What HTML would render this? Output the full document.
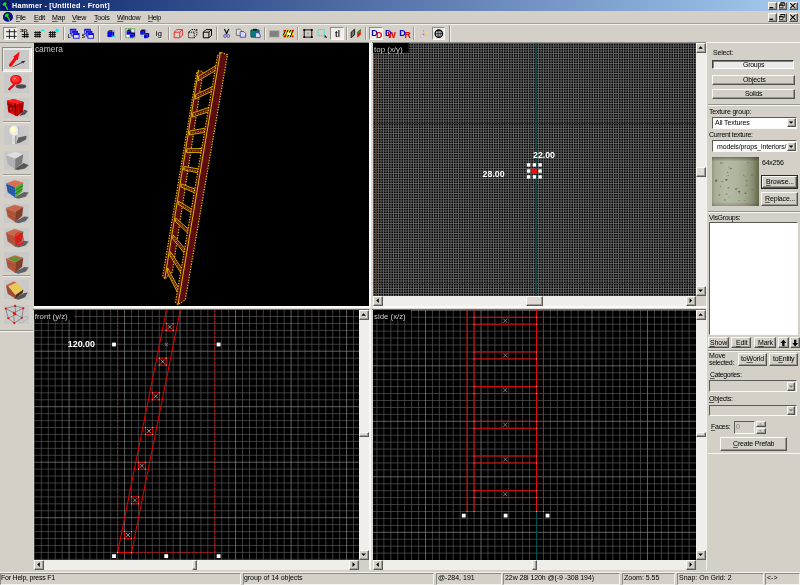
<!DOCTYPE html><html><head><meta charset="utf-8"><title>Hammer - [Untitled - Front]</title><style>
*{box-sizing:border-box}
html,body{margin:0;padding:0}
body{width:800px;height:585px;overflow:hidden;background:#d4d0c8;position:relative;font-family:"Liberation Sans",sans-serif;font-size:8.6px;color:#000}
.a{position:absolute}
.t{position:absolute;white-space:nowrap;line-height:10px;height:10px}
.btn{position:absolute;background:#d4d0c8;border:1px solid;border-color:#fbfaf8 #55534f #55534f #fbfaf8;box-shadow:inset -1px -1px 0 #9a9892;text-align:center;white-space:nowrap;overflow:hidden}
.sunk{position:absolute;border:1.25px solid;border-color:#5c5a56 #fbfaf8 #fbfaf8 #5c5a56}
.sb{position:absolute;background:#efeeea}
.ar{position:absolute;background:#d4d0c8;border:1px solid;border-color:#fbfaf8 #5e5c58 #5e5c58 #fbfaf8;box-shadow:inset -1px -1px 0 #a09e98}
.sep{position:absolute;border-top:1px solid #96948e;border-bottom:1px solid #f8f7f4;height:2px}
.vsep{position:absolute;border-left:1px solid #808080;border-right:1px solid #fff;width:2px}
u{text-decoration:underline;text-decoration-thickness:0.65px;text-underline-offset:0.6px;text-decoration-color:rgba(0,0,0,.55)}
svg{position:absolute;display:block}
svg text{font-family:"Liberation Sans",sans-serif}
svg,.t{will-change:transform}
</style></head><body><div class="a" style="left:0;top:0;width:800px;height:11px;background:linear-gradient(90deg,#0a246a 0%,#a6caf0 100%)"></div>
<div class="t" style="left:12.1px;top:0.5999999999999996px;font-size:7.2px;color:#fff;font-weight:bold;letter-spacing:0.237px;">Hammer - [Untitled - Front]</div>
<svg style="left:0.39999999999999947px;top:-0.40000000000000036px" width="11.4" height="11.4" viewBox="-5.7 -5.7 11.4 11.4"><circle r="4.7" fill="#06062a"/><clipPath id="gc5"><circle r="4.7"/></clipPath><g clip-path="url(#gc5)"><path d="M-5.7,-3.6h1.5M-3.4,-3.6h1.5M-1.1,-3.6h1.5M1.2,-3.6h1.5M3.5,-3.6h1.5M-4.8,-2.2h1.5M-2.5,-2.2h1.5M-0.2,-2.2h1.5M2.1,-2.2h1.5M4.4,-2.2h1.5M-5.7,-0.8h1.5M-3.4,-0.8h1.5M-1.1,-0.8h1.5M1.2,-0.8h1.5M3.5,-0.8h1.5M-4.8,0.6h1.5M-2.5,0.6h1.5M-0.2,0.6h1.5M2.1,0.6h1.5M4.4,0.6h1.5M-5.7,2.0h1.5M-3.4,2.0h1.5M-1.1,2.0h1.5M1.2,2.0h1.5M3.5,2.0h1.5M-4.8,3.4h1.5M-2.5,3.4h1.5M-0.2,3.4h1.5M2.1,3.4h1.5M4.4,3.4h1.5" stroke="#1010f0" stroke-width="1.1" fill="none"/><path d="M-3.3,-1 L-2.4,-2.7 L-0.8,-3.5 L0.6,-3.3 L0.9,-1.8 L0.2,-0.6 L1.1,0.8 L2.1,2.6 L2.3,4.4 L1.3,4.7 L0.6,2.7 L-0.4,1 L-1,-0.1 L-2.5,0.1 Z" fill="#10e010"/></g></svg>
<svg style="left:1.5999999999999996px;top:11.299999999999999px" width="11.8" height="11.8" viewBox="-5.9 -5.9 11.8 11.8"><circle r="4.9" fill="#06062a"/><clipPath id="gc17"><circle r="4.9"/></clipPath><g clip-path="url(#gc17)"><path d="M-5.9,-3.6h1.5M-3.6,-3.6h1.5M-1.3,-3.6h1.5M1.0,-3.6h1.5M3.3,-3.6h1.5M-5.0,-2.2h1.5M-2.7,-2.2h1.5M-0.4,-2.2h1.5M1.9,-2.2h1.5M4.2,-2.2h1.5M-5.9,-0.8h1.5M-3.6,-0.8h1.5M-1.3,-0.8h1.5M1.0,-0.8h1.5M3.3,-0.8h1.5M-5.0,0.6h1.5M-2.7,0.6h1.5M-0.4,0.6h1.5M1.9,0.6h1.5M4.2,0.6h1.5M-5.9,2.0h1.5M-3.6,2.0h1.5M-1.3,2.0h1.5M1.0,2.0h1.5M3.3,2.0h1.5M-5.0,3.4h1.5M-2.7,3.4h1.5M-0.4,3.4h1.5M1.9,3.4h1.5M4.2,3.4h1.5" stroke="#1010f0" stroke-width="1.1" fill="none"/><path d="M-3.3,-1 L-2.4,-2.7 L-0.8,-3.5 L0.6,-3.3 L0.9,-1.8 L0.2,-0.6 L1.1,0.8 L2.1,2.6 L2.3,4.4 L1.3,4.7 L0.6,2.7 L-0.4,1 L-1,-0.1 L-2.5,0.1 Z" fill="#10e010"/></g></svg>
<div class="btn" style="left:767.5px;top:1.5px;width:9.0px;height:8.3px"></div>
<svg style="left:0;top:0" width="800" height="40"><rect x="769.4" y="7.050000000000001" width="3.8" height="1.2" fill="#000"/></svg>
<div class="btn" style="left:777.5px;top:1.5px;width:9.5px;height:8.3px"></div>
<svg style="left:0;top:0" width="800" height="40"><rect x="780.85" y="2.7500000000000004" width="3.6" height="3" fill="none" stroke="#000" stroke-width="0.65"/><rect x="780.55" y="2.45" width="4.2" height="1.0" fill="#000"/><rect x="779.35" y="4.95" width="3.6" height="2.9" fill="#d4d0c8" stroke="#000" stroke-width="0.65"/><rect x="779.05" y="4.65" width="4.2" height="1.0" fill="#000"/></svg>
<div class="btn" style="left:788.5px;top:1.5px;width:9.5px;height:8.3px"></div>
<svg style="left:0;top:0" width="800" height="40"><path d="M790.25,3.0500000000000003 L795.45,8.25 M795.45,3.0500000000000003 L790.25,8.25" stroke="#000" stroke-width="1.05"/></svg>
<div class="btn" style="left:767.5px;top:13px;width:9.0px;height:8.5px"></div>
<svg style="left:0;top:0" width="800" height="40"><rect x="769.4" y="18.65" width="3.8" height="1.2" fill="#000"/></svg>
<div class="btn" style="left:777.5px;top:13px;width:9.5px;height:8.5px"></div>
<svg style="left:0;top:0" width="800" height="40"><rect x="780.85" y="14.35" width="3.6" height="3" fill="none" stroke="#000" stroke-width="0.65"/><rect x="780.55" y="14.05" width="4.2" height="1.0" fill="#000"/><rect x="779.35" y="16.55" width="3.6" height="2.9" fill="#d4d0c8" stroke="#000" stroke-width="0.65"/><rect x="779.05" y="16.25" width="4.2" height="1.0" fill="#000"/></svg>
<div class="btn" style="left:788.5px;top:13px;width:9.5px;height:8.5px"></div>
<svg style="left:0;top:0" width="800" height="40"><path d="M790.25,14.65 L795.45,19.85 M795.45,14.65 L790.25,19.85" stroke="#000" stroke-width="1.05"/></svg>
<div class="t" style="left:16px;top:13.0px;font-size:7.1px;color:#000;letter-spacing:-0.460px;"><u>F</u>ile</div>
<div class="t" style="left:33.5px;top:13.0px;font-size:7.1px;color:#000;letter-spacing:-0.334px;"><u>E</u>dit</div>
<div class="t" style="left:51.9px;top:13.0px;font-size:7.1px;color:#000;letter-spacing:-0.237px;"><u>M</u>ap</div>
<div class="t" style="left:72.2px;top:13.0px;font-size:7.1px;color:#000;letter-spacing:-0.315px;"><u>V</u>iew</div>
<div class="t" style="left:93.8px;top:13.0px;font-size:7.1px;color:#000;letter-spacing:-0.215px;"><u>T</u>ools</div>
<div class="t" style="left:116.8px;top:13.0px;font-size:7.1px;color:#000;letter-spacing:-0.342px;"><u>W</u>indow</div>
<div class="t" style="left:148px;top:13.0px;font-size:7.1px;color:#000;letter-spacing:-0.451px;"><u>H</u>elp</div>
<div class="sep" style="left:0;top:23.2px;width:800px;border-top-color:#a4a29c;border-bottom-color:#f2f1ee"></div>
<div class="sep" style="left:0;top:42px;width:710px;border-bottom:0;height:1px"></div>
<div class="vsep" style="left:449px;top:25px;height:17px;border-left-color:#8a8882;border-right-color:#efeeea"></div><div class="vsep" style="left:98.2px;top:25.5px;height:16px;border-left-color:#9a9892;border-right-color:#f2f1ee"></div><div class="vsep" style="left:63.4px;top:27px;height:13px;border-left-color:#9a9892;border-right-color:#efeeea"></div><div class="vsep" style="left:120.0px;top:27px;height:13px;border-left-color:#9a9892;border-right-color:#efeeea"></div><div class="vsep" style="left:167.9px;top:27px;height:13px;border-left-color:#9a9892;border-right-color:#efeeea"></div><div class="vsep" style="left:216.0px;top:27px;height:13px;border-left-color:#9a9892;border-right-color:#efeeea"></div><div class="vsep" style="left:263.9px;top:27px;height:13px;border-left-color:#9a9892;border-right-color:#efeeea"></div><div class="vsep" style="left:297.4px;top:27px;height:13px;border-left-color:#9a9892;border-right-color:#efeeea"></div><div class="vsep" style="left:346.0px;top:27px;height:13px;border-left-color:#9a9892;border-right-color:#efeeea"></div><div class="vsep" style="left:365.2px;top:27px;height:13px;border-left-color:#9a9892;border-right-color:#efeeea"></div><div class="vsep" style="left:412.9px;top:27px;height:13px;border-left-color:#9a9892;border-right-color:#efeeea"></div><div class="a" style="left:3.4px;top:26.5px;width:13.7px;height:13.5px;background:#eeede9;border:1px solid;border-color:#8e8c86 #f8f7f4 #f8f7f4 #8e8c86"></div><div class="a" style="left:330.1px;top:26.8px;width:13.8px;height:13.4px;background:#eeede9;border:1px solid;border-color:#8e8c86 #f8f7f4 #f8f7f4 #8e8c86"></div><div class="a" style="left:368.5px;top:26.8px;width:14.1px;height:13.4px;background:#eeede9;border:1px solid;border-color:#8e8c86 #f8f7f4 #f8f7f4 #8e8c86"></div><div class="a" style="left:431.5px;top:26.8px;width:13.8px;height:13.4px;background:#eeede9;border:1px solid;border-color:#8e8c86 #f8f7f4 #f8f7f4 #8e8c86"></div><svg style="left:0px;top:24px" width="460" height="19" viewBox="0 24 460 19" ><path d="M9.45,29.2V38.9M14.4,29.2V38.9M6.1,31.7H16.7M6.1,36.4H16.7" stroke="#202020" stroke-width="0.95" fill="none"/><text transform="translate(19.9,32.1) scale(1.22,0.88)" font-size="4.9" font-weight="bold" fill="#000">3D</text><path d="M24.5,32V37.8M27.0,32V37.8M21.8,34.6H28.8M21.8,36.6H28.8" stroke="#000" stroke-width="0.95" fill="none"/><path d="M35.85,31.2V37.6M37.9,31.2V37.6M39.7,31.2V37.6M34.1,32.55H41.0M34.1,34.6H41.0M34.1,36.45H41.0" stroke="#181818" stroke-width="1.0" fill="none"/><rect x="40.9" y="29.7" width="3.6" height="1.5" rx="0.7" fill="#00f0f0"/><path d="M50.5,31.2V37.6M52.5,31.2V37.6M54.3,31.2V37.6M48.7,32.55H55.9M48.7,34.6H55.9M48.7,36.45H55.9" stroke="#181818" stroke-width="1.0" fill="none"/><path d="M57,28.3l2.2,2.2l-2.2,2.2l-2.2,-2.2z" fill="#00f0f0"/><text x="67.7" y="37.8" font-size="4.8" font-weight="bold" fill="#000">L</text><rect x="70.3" y="29.2" width="5.6" height="4.6" fill="#e8e8ff" stroke="#1010e0" stroke-width="0.9"/><rect x="70.3" y="29.2" width="5.6" height="1.5" fill="#1010e0"/><rect x="71.89999999999999" y="31.4" width="5.6" height="4.6" fill="#e8e8ff" stroke="#1010e0" stroke-width="0.9"/><rect x="71.89999999999999" y="31.4" width="5.6" height="1.5" fill="#1010e0"/><rect x="73.5" y="33.6" width="5.6" height="4.6" fill="#e8e8ff" stroke="#1010e0" stroke-width="0.9"/><rect x="73.5" y="33.6" width="5.6" height="1.5" fill="#1010e0"/><text x="81.7" y="37.8" font-size="4.8" font-weight="bold" fill="#000">S</text><rect x="84.7" y="29.2" width="5.6" height="4.6" fill="#e8e8ff" stroke="#1010e0" stroke-width="0.9"/><rect x="84.7" y="29.2" width="5.6" height="1.5" fill="#1010e0"/><rect x="86.3" y="31.4" width="5.6" height="4.6" fill="#e8e8ff" stroke="#1010e0" stroke-width="0.9"/><rect x="86.3" y="31.4" width="5.6" height="1.5" fill="#1010e0"/><rect x="87.9" y="33.6" width="5.6" height="4.6" fill="#e8e8ff" stroke="#1010e0" stroke-width="0.9"/><rect x="87.9" y="33.6" width="5.6" height="1.5" fill="#1010e0"/><path d="M107.4,31.8l1.6,-1.6h5.2l-1.6,1.6z" fill="#101030"/><path d="M112.60000000000001,31.8l1.6,-1.6v5.2l-1.6,1.6z" fill="#000090"/><rect x="107.4" y="31.8" width="5.2" height="5.2" fill="#0808e8"/><path d="M111.5,35.6h3.6v1.2h-3.6z" fill="#00d8d8"/><rect x="112.4" y="30.4" width="1.6" height="1.2" fill="#fff"/><rect x="125.6" y="28.6" width="9.2" height="9.3" fill="none" stroke="#20a020" stroke-width="0.8" stroke-dasharray="1.2 0.8"/><path d="M126.6,31.200000000000003l1.6,-1.6h3.4l-1.6,1.6z" fill="#101030"/><path d="M130.0,31.200000000000003l1.6,-1.6v3.4l-1.6,1.6z" fill="#000090"/><rect x="126.6" y="31.200000000000003" width="3.4" height="3.4" fill="#0808e8"/><path d="M130,34.2l1.6,-1.6h3.4l-1.6,1.6z" fill="#101030"/><path d="M133.4,34.2l1.6,-1.6v3.4l-1.6,1.6z" fill="#000090"/><rect x="130" y="34.2" width="3.4" height="3.4" fill="#0808e8"/><rect x="131.2" y="29.8" width="2.2" height="1.8" fill="#f4f4f4"/><rect x="126.8" y="35" width="2.2" height="1.8" fill="#f4f4f4"/><path d="M140.2,31.0l1.6,-1.6h3.6l-1.6,1.6z" fill="#101030"/><path d="M143.79999999999998,31.0l1.6,-1.6v3.6l-1.6,1.6z" fill="#000090"/><rect x="140.2" y="31.0" width="3.6" height="3.6" fill="#0808e8"/><path d="M144,34.6l1.6,-1.6h3.6l-1.6,1.6z" fill="#101030"/><path d="M147.6,34.6l1.6,-1.6v3.6l-1.6,1.6z" fill="#000090"/><rect x="144" y="34.6" width="3.6" height="3.6" fill="#0808e8"/><path d="M145.6,30.2l2.2,1.8M141,35.4l2,1.8" stroke="#30c8d8" stroke-width="0.9" stroke-dasharray="1 0.7"/><text x="155.8" y="36.3" font-size="8" fill="#000">ig</text><path d="M174.2,32.2h5.6v5.6h-5.6zM174.2,32.2l2.6,-2.6h5.6l-2.6,2.6M182.39999999999998,29.6v5.6l-2.6,2.6" stroke="#f02020" stroke-width="0.9" fill="none"/><path d="M188.6,32.2h5.6v5.6h-5.6zM188.6,32.2l2.6,-2.6h5.6l-2.6,2.6M196.79999999999998,29.6v5.6l-2.6,2.6" stroke="#000" stroke-width="0.9" fill="none" stroke-dasharray="1.3 0.8"/><path d="M203.3,32.2h5.6v5.6h-5.6zM203.3,32.2l2.6,-2.6h5.6l-2.6,2.6M211.5,29.6v5.6l-2.6,2.6" stroke="#000" stroke-width="1.0" fill="none"/><path d="M224.4,29l2.6,5.2M228.8,29l-2.6,5.2" stroke="#000" stroke-width="1.1" fill="none"/><ellipse cx="225" cy="36" rx="1.3" ry="1.5" fill="none" stroke="#5050c0" stroke-width="0.9"/><ellipse cx="228.3" cy="36" rx="1.3" ry="1.5" fill="none" stroke="#5050c0" stroke-width="0.9"/><path d="M236.4,29.2h3.6l1.6,1.6v4.6h-5.2z" fill="#e0e0e0" stroke="#606060" stroke-width="0.8"/><path d="M240.2,31.6h3.6l1.8,1.8v3.8h-5.4z" fill="#dcdcf4" stroke="#3030b0" stroke-width="0.8"/><rect x="250.8" y="29.8" width="8.4" height="7.4" rx="0.8" fill="#008080" stroke="#003838" stroke-width="0.7"/><rect x="253" y="28.8" width="4" height="1.8" fill="#101010"/><path d="M255.4,32.8h3l1.8,1.6v3.2h-4.8z" fill="#dcdcf4" stroke="#3030b0" stroke-width="0.8"/><rect x="269.3" y="30.8" width="9.8" height="6.3" fill="#808080" stroke="#b0b0b0" stroke-width="0.6"/><rect x="283.6" y="29.9" width="9.9" height="7.4" fill="#f0e000"/><path d="M285,37.3l3,-7.4M287.6,37.3l3,-7.4M290.2,37.3l3,-7.4M283.2,35.4l2.4,-5.5" stroke="#000" stroke-width="1" fill="none"/><rect x="286.6" y="32.5" width="4.2" height="2.4" fill="#f8f8f0"/><rect x="283.6" y="29.9" width="1.8" height="1.8" fill="#f00000"/><rect x="291.7" y="29.9" width="1.8" height="1.8" fill="#f00000"/><rect x="283.6" y="35.5" width="1.8" height="1.8" fill="#f00000"/><rect x="291.7" y="35.5" width="1.8" height="1.8" fill="#f00000"/><rect x="304.2" y="29.9" width="7.6" height="7.2" fill="none" stroke="#000" stroke-width="0.9"/><rect x="303.3" y="29" width="1.8" height="1.8" fill="#000"/><rect x="310.9" y="29" width="1.8" height="1.8" fill="#000"/><rect x="303.3" y="36.2" width="1.8" height="1.8" fill="#000"/><rect x="310.9" y="36.2" width="1.8" height="1.8" fill="#000"/><path d="M306.70,32.20L309.30,34.80M309.30,32.20L306.70,34.80" stroke="#808080" stroke-width="0.6" fill="none"/><rect x="318" y="29.6" width="6.4" height="6" fill="none" stroke="#20d8d8" stroke-width="0.9" stroke-dasharray="1.3 0.8"/><path d="M324.6,35.2v2.6l0.8,-0.6l0.9,0.9l0.6,-0.6l-0.9,-0.9l0.9,-0.3z" fill="#000"/><text x="335" y="36.7" font-size="8.2" font-weight="bold" fill="#111">tl</text><path d="M351.2,32.2l3.4,-3v5.6l-3.4,3z" fill="#707070" stroke="#000" stroke-width="0.8"/><path d="M357.2,32.2l3.6,-3.2v5.6l-3.6,3.2z" fill="#e81010"/><path d="M357.2,34.8l3.6,-3.2v-2.6l-3.6,3.2z" fill="#10a010"/><text x="371.2" y="35.8" font-size="9" font-weight="bold" fill="#0808d0">D</text><text x="376" y="38.3" font-size="8.8" font-weight="bold" fill="#e80000">D</text><text x="385" y="35.8" font-size="9" font-weight="bold" fill="#0808d0">D</text><text x="387.6" y="38.3" font-size="8.8" font-weight="bold" fill="#e80000">W</text><text x="399.3" y="35.8" font-size="9" font-weight="bold" fill="#0808d0">D</text><text x="404.4" y="38.3" font-size="8.8" font-weight="bold" fill="#e80000">R</text><path d="M421,36.8l3,-3.6l1.4,1.2l-3,3.4z" fill="#f8f8f8" stroke="#909090" stroke-width="0.4"/><circle cx="426.6" cy="32.4" r="1.1" fill="#f0e040"/><circle cx="423.4" cy="34.6" r="1" fill="#e060d0"/><circle cx="423.6" cy="30.8" r="0.6" fill="#808080"/><circle cx="438.8" cy="33.7" r="3.7" fill="#f0f0f0" stroke="#000" stroke-width="1.3"/><path d="M438.8,30v7.4M435.1,33.7h7.4" stroke="#000" stroke-width="0.7"/><ellipse cx="438.8" cy="33.7" rx="1.7" ry="3.6" fill="none" stroke="#000" stroke-width="0.6"/></svg>
<div class="a" style="left:0;top:43px;width:34px;height:528px;background:#d4d0c8"></div><div class="a" style="left:32.6px;top:43px;width:1px;height:288px;background:#f4f3f0"></div><div class="a" style="left:0;top:330px;width:33.5px;height:1px;background:#9a9892"></div><div class="a" style="left:0;top:331px;width:33.5px;height:1px;background:#f4f3f0"></div><div class="a" style="left:1.6px;top:47.4px;width:30.6px;height:24.8px;background:#eae9e4;border:1px solid;border-color:#8a8882 #fbfaf8 #fbfaf8 #8a8882"></div><div class="a" style="left:4.1px;top:49.5px;width:25.4px;height:19.3px;background:#c9c9c9"></div><div class="a" style="left:4.1px;top:74.2px;width:25.4px;height:19.3px;background:#c9c9c9"></div><div class="a" style="left:4.1px;top:98.3px;width:25.4px;height:19.3px;background:#c9c9c9"></div><div class="a" style="left:4.1px;top:126.2px;width:25.4px;height:19.3px;background:#c9c9c9"></div><div class="a" style="left:4.1px;top:150.6px;width:25.4px;height:19.3px;background:#c9c9c9"></div><div class="a" style="left:4.1px;top:179px;width:25.4px;height:19.3px;background:#c9c9c9"></div><div class="a" style="left:4.1px;top:203.5px;width:25.4px;height:19.3px;background:#c9c9c9"></div><div class="a" style="left:4.1px;top:227.9px;width:25.4px;height:19.3px;background:#c9c9c9"></div><div class="a" style="left:4.1px;top:252.3px;width:25.4px;height:19.3px;background:#c9c9c9"></div><div class="a" style="left:4.1px;top:280px;width:25.4px;height:19.3px;background:#c9c9c9"></div><div class="a" style="left:4.1px;top:304.7px;width:25.4px;height:19.3px;background:#c9c9c9"></div><div class="sep" style="left:2.6px;top:121.4px;width:28.4px;border-top-color:#9c9a94;border-bottom-color:#eceae6"></div><div class="sep" style="left:2.6px;top:173.8px;width:28.4px;border-top-color:#9c9a94;border-bottom-color:#eceae6"></div><div class="sep" style="left:2.6px;top:275px;width:28.4px;border-top-color:#9c9a94;border-bottom-color:#eceae6"></div><svg style="left:0px;top:43px" width="34" height="290" viewBox="0 43 34 290" ><path d="M12,66.9L21.6,62.2L21.3,61.3L25.5,60.8L23.2,63.6L22.6,62.8L12.6,67.2z" fill="#303030"/><path d="M19.7,51.6L13.2,56.7L14.3,57.5L9.2,64.3a1.5,1.5 0 0 0 2.6,1.6L16.7,59.5L17.8,60z" fill="#f80808"/><ellipse cx="20.9" cy="86.4" rx="5.4" ry="2.2" fill="#4a4a4a"/><path d="M13.6,83.4L8.3,88.6a1.2,1.2 0 0 0 1.6,1.7L15.4,85z" fill="#e80808"/><ellipse cx="16" cy="79.8" rx="5.8" ry="4.9" fill="#e80c0c"/><ellipse cx="15.6" cy="79.3" rx="4" ry="3.2" fill="#ff3030"/><ellipse cx="14.4" cy="78.4" rx="1.2" ry="0.9" fill="#ff9090"/><path d="M19,116L24.6,109.6L27.6,111.2L25,114.6z" fill="#505050"/><path d="M6.9,100.7L13.8,98.9L23.6,101.9L23,111.6L17,116.3L8.2,112.2z" fill="#e00808"/><path d="M6.9,100.7L13.8,98.9L23.6,101.9L16.6,104.6z" fill="#ff2020"/><path d="M16.6,104.6L23.6,101.9L23,111.6L17,116.3z" fill="#a80000"/><path d="M7.2,103.8L16.4,107.2" stroke="#600000" stroke-width="1.1" fill="none"/><path d="M15.2,103.2L15.6,115.6" stroke="#500000" stroke-width="1.3" fill="none"/><ellipse cx="10.6" cy="108.6" rx="2.6" ry="3" fill="#8a0000"/><ellipse cx="10.8" cy="108.8" rx="1.3" ry="1.6" fill="#f01818"/><path d="M18.4,106.4L18.8,114.4" stroke="#d01010" stroke-width="1.2" fill="none"/><path d="M16.2,143.6L18.4,137.4L26.6,135.8L26,139.4L19.8,142.8z" fill="#5c5c5c"/><rect x="12.4" y="135.4" width="3.9" height="8.8" rx="1.3" fill="#e6e6e6"/><rect x="14.9" y="135.4" width="1.6" height="8.8" rx="0.7" fill="#9c9c9c"/><path d="M12.4,139.2h3.9M12.4,141.2h3.9" stroke="#b4b4b4" stroke-width="0.5"/><circle cx="14.4" cy="130.7" r="5.1" fill="#ececec"/><path d="M16.4,126a5.1,5.1 0 0 1 1,9a8,8 0 0 0 -1,-9z" fill="#a8a8a8"/><circle cx="13.3" cy="129.6" r="3.1" fill="#ffffb4"/><circle cx="12.9" cy="129.2" r="1.6" fill="#ffffe0"/><path d="M14.1,169.2l9.6,-6.2l5,2.2l-3.8,3.2l-7,1.6z" fill="#484848" opacity="0.9"/><path d="M5.8999999999999995,155.2L14.7,151.79999999999998L23.299999999999997,154.2L15.299999999999999,158.79999999999998z" fill="#dedede"/><path d="M5.8999999999999995,155.2L15.299999999999999,158.79999999999998L15.1,169.2L7.699999999999999,164.2z" fill="#b2b2b2"/><path d="M15.299999999999999,158.79999999999998L23.299999999999997,154.2L22.1,163.2L15.1,169.2z" fill="#7c7c7c"/><path d="M14.1,197.4l10,-5.5l4.6,0.6l-3.2,4.2l-7,2z" fill="#505050" opacity="0.85"/><path d="M5.8999999999999995,183.6L14.7,180.2L23.299999999999997,182.6L15.299999999999999,187.2z" fill="#e26a4c"/><path d="M5.8999999999999995,183.6L15.299999999999999,187.2L15.1,197.6L7.699999999999999,192.6z" fill="#2a66b8"/><path d="M7.1,185.4l7.6,3.2M7.5,188l7.4,3.6M7.8999999999999995,190.6l7,3.8" stroke="#103060" stroke-width="0.9" stroke-dasharray="1.4 1.2" fill="none"/><path d="M15.299999999999999,187.2L23.299999999999997,182.6L22.1,191.6L15.1,197.6z" fill="#48ac34"/><path d="M15.299999999999999,190.4l7.6,-4.8M15.2,193.8l7.2,-4.8" stroke="#286018" stroke-width="0.8" fill="none"/><path d="M14.1,221.9l10,-5.5l4.6,0.6l-3.2,4.2l-7,2z" fill="#505050" opacity="0.85"/><path d="M5.8999999999999995,208.1L14.7,204.7L23.299999999999997,207.1L15.299999999999999,211.7z" fill="#c8684a"/><path d="M5.8999999999999995,208.1L15.299999999999999,211.7L15.1,222.1L7.699999999999999,217.1z" fill="#b2563c"/><path d="M15.299999999999999,211.7L23.299999999999997,207.1L22.1,216.1L15.1,222.1z" fill="#84402c"/><path d="M6.699999999999999,211.5l8.5,3.7M7.3,214.5l7.9,4M15.299999999999999,215.3l7.4,-4.6M15.2,218.7l7,-4.8" stroke="#6a3020" stroke-width="0.45" opacity="0.55" fill="none"/><path d="M14.1,246.3l10,-5.5l4.6,0.6l-3.2,4.2l-7,2z" fill="#505050" opacity="0.85"/><path d="M5.8999999999999995,232.5L14.7,229.1L23.299999999999997,231.5L15.299999999999999,236.1z" fill="#c8684a"/><path d="M5.8999999999999995,232.5L15.299999999999999,236.1L15.1,246.5L7.699999999999999,241.5z" fill="#b2563c"/><path d="M15.299999999999999,236.1L23.299999999999997,231.5L22.1,240.5L15.1,246.5z" fill="#84402c"/><path d="M6.699999999999999,235.9l8.5,3.7M7.3,238.9l7.9,4M15.299999999999999,239.70000000000002l7.4,-4.6M15.2,243.1l7,-4.8" stroke="#6a3020" stroke-width="0.45" opacity="0.55" fill="none"/><g transform="translate(19.1,238.70000000000002) rotate(-14)" fill="none" stroke="#ff1010" stroke-width="0.95"><ellipse rx="4" ry="5.8"/><ellipse rx="2.5" ry="3.8"/><ellipse rx="1" ry="1.7" fill="#ff1010"/></g><g transform="translate(0,2.4)"><path d="M14.1,270.1l10,-5.5l4.6,0.6l-3.2,4.2l-7,2z" fill="#505050" opacity="0.85"/><path d="M5.8999999999999995,256.3L14.7,252.9L23.299999999999997,255.3L15.299999999999999,259.90000000000003z" fill="#c8684a"/><path d="M5.8999999999999995,256.3L15.299999999999999,259.90000000000003L15.1,270.3L7.699999999999999,265.3z" fill="#b2563c"/><path d="M15.299999999999999,259.90000000000003L23.299999999999997,255.3L22.1,264.3L15.1,270.3z" fill="#84402c"/><path d="M6.699999999999999,259.70000000000005l8.5,3.7M7.3,262.70000000000005l7.9,4M15.299999999999999,263.5l7.4,-4.6M15.2,266.90000000000003l7,-4.8" stroke="#6a3020" stroke-width="0.45" opacity="0.55" fill="none"/></g><path d="M8.5,258.8L14.7,256.6L20.700000000000003,258.2L15.299999999999999,261.40000000000003z" fill="#4f9a2c"/><path d="M14.1,298.4l10,-5.5l3.6,-0.4l-2.6,4.8l-6.6,2.4z" fill="#484848" opacity="0.9"/><path d="M5.8999999999999995,285.2L13.7,281.6L16.7,282.4L8.5,286.4z" fill="#c86848"/><path d="M5.8999999999999995,285.2L8.5,286.4L15.5,295L15.1,298.6L7.699999999999999,293.8z" fill="#a04c34"/><path d="M8.5,286.4L16.7,282.4L23.5,289.6L15.5,295z" fill="#e8c858"/><path d="M15.5,295L23.5,289.6L22.700000000000003,293L15.1,298.6z" fill="#50281c"/><path d="M18.1,321.3l8,-5l2.6,1.6l-7.4,5z" fill="none" stroke="#a8a8a8" stroke-width="0.6"/><path d="M5.7,308.5L15.1,305.9M15.1,305.9L23.3,308.3M23.3,308.3L13.7,312.7M13.7,312.7L5.7,308.5M5.7,308.5L8.3,318.3M13.7,312.7L14.3,323.1M23.3,308.3L21.9,317.7M8.3,318.3L14.3,323.1M14.3,323.1L21.9,317.7M15.1,305.9L15.5,314.3M15.5,314.3L8.3,318.3M15.5,314.3L21.9,317.7" stroke="#585858" stroke-width="0.55" fill="none"/><circle cx="5.7" cy="308.5" r="1.05" fill="#f00808"/><circle cx="15.1" cy="305.9" r="1.05" fill="#f00808"/><circle cx="23.3" cy="308.3" r="1.05" fill="#f00808"/><circle cx="13.7" cy="312.7" r="1.05" fill="#f00808"/><circle cx="8.3" cy="318.3" r="1.05" fill="#f00808"/><circle cx="15.5" cy="314.3" r="1.05" fill="#f00808"/><circle cx="21.9" cy="317.7" r="1.05" fill="#f00808"/><circle cx="14.3" cy="323.1" r="1.05" fill="#f00808"/><circle cx="14.7" cy="313.7" r="1.05" fill="#f00808"/></svg>
<div class="a" style="left:33px;top:42px;width:674px;height:529px;background:#dcd9d2"></div><div class="a" style="left:34px;top:306px;width:336.5px;height:2.2px;background:#fbfaf8"></div><div class="a" style="left:373px;top:306px;width:333px;height:2.2px;background:#fbfaf8"></div><div class="a" style="left:369px;top:43px;width:1.5px;height:265px;background:#fbfaf8"></div><div class="a" style="left:369px;top:310px;width:1.5px;height:260.5px;background:#fbfaf8"></div><div class="a" style="left:34px;top:570px;width:336.5px;height:1.2px;background:#fbfaf8"></div><div class="a" style="left:373px;top:570px;width:333px;height:1.2px;background:#fbfaf8"></div><div class="a" style="left:372.6px;top:42.5px;width:0.5px;height:263.5px;background:#6e6c68"></div><div class="a" style="left:372.6px;top:309.4px;width:0.5px;height:260.6px;background:#6e6c68"></div><div class="a" style="left:33.3px;top:309.3px;width:336px;height:0.8px;background:#6e6c68"></div><div class="a" style="left:372.3px;top:309.3px;width:334px;height:0.8px;background:#6e6c68"></div><div class="a" style="left:33.3px;top:42.4px;width:336px;height:0.7px;background:#8a8884"></div><div class="a" style="left:372.3px;top:42.4px;width:334px;height:0.7px;background:#8a8884"></div><div class="a" style="left:34px;top:43px;width:335px;height:263px;background:#000"></div><svg style="left:34px;top:43px" width="335" height="263" viewBox="34 43 335 263" ><polygon points="196.6,73.1 198.5,70.4 203.0,71.6 172.3,272.0 164.8,278.9 162.8,275.9" fill="#5a0c10" stroke="#e8c600" stroke-width="1.15" stroke-dasharray="1.35 1.35"/><line x1="198.5" y1="70.4" x2="164.8" y2="278.9" stroke="#e8c600" stroke-width="0.9"/><polygon points="198.8,76.1 216.3,65.4 215.4,70.6 198.0,80.9" fill="#5a0c10" stroke="#e8c600" stroke-width="0.85"/><line x1="198.4" y1="78.8" x2="215.8" y2="68.3" stroke="#e8c600" stroke-width="0.7" stroke-dasharray="1.35 1.35"/><polygon points="195.8,94.6 212.7,86.4 211.9,91.4 195.0,99.1" fill="#5a0c10" stroke="#e8c600" stroke-width="0.85"/><line x1="195.4" y1="97.1" x2="212.3" y2="89.2" stroke="#e8c600" stroke-width="0.7" stroke-dasharray="1.35 1.35"/><polygon points="192.8,112.9 209.2,107.3 208.4,112.0 192.1,117.1" fill="#5a0c10" stroke="#e8c600" stroke-width="0.85"/><line x1="192.5" y1="115.3" x2="208.8" y2="109.9" stroke="#e8c600" stroke-width="0.7" stroke-dasharray="1.35 1.35"/><polygon points="189.9,131.0 205.6,128.0 204.9,132.4 189.3,134.9" fill="#5a0c10" stroke="#e8c600" stroke-width="0.85"/><line x1="189.6" y1="133.2" x2="205.3" y2="130.5" stroke="#e8c600" stroke-width="0.7" stroke-dasharray="1.35 1.35"/><polygon points="187.0,148.8 202.1,148.5 201.4,152.7 186.4,152.4" fill="#5a0c10" stroke="#e8c600" stroke-width="0.85"/><line x1="186.7" y1="150.9" x2="201.8" y2="150.9" stroke="#e8c600" stroke-width="0.7" stroke-dasharray="1.35 1.35"/><polygon points="184.1,166.5 198.7,168.9 198.0,172.8 183.6,169.8" fill="#5a0c10" stroke="#e8c600" stroke-width="0.85"/><line x1="183.9" y1="168.4" x2="198.3" y2="171.2" stroke="#e8c600" stroke-width="0.7" stroke-dasharray="1.35 1.35"/><polygon points="181.3,183.9 195.2,189.1 194.6,192.8 180.8,186.9" fill="#5a0c10" stroke="#e8c600" stroke-width="0.85"/><line x1="181.1" y1="185.7" x2="194.9" y2="191.3" stroke="#e8c600" stroke-width="0.7" stroke-dasharray="1.35 1.35"/><polygon points="178.5,201.2 191.8,209.2 191.2,212.8 178.1,204.2" fill="#5a0c10" stroke="#e8c600" stroke-width="0.85"/><line x1="178.3" y1="203.0" x2="191.5" y2="211.3" stroke="#e8c600" stroke-width="0.7" stroke-dasharray="1.35 1.35"/><polygon points="175.8,218.2 188.4,229.1 187.7,233.0 175.3,221.4" fill="#5a0c10" stroke="#e8c600" stroke-width="0.85"/><line x1="175.5" y1="220.1" x2="188.1" y2="231.4" stroke="#e8c600" stroke-width="0.7" stroke-dasharray="1.35 1.35"/><polygon points="173.1,235.0 185.1,248.8 184.3,253.1 172.5,238.5" fill="#5a0c10" stroke="#e8c600" stroke-width="0.85"/><line x1="172.8" y1="237.0" x2="184.7" y2="251.3" stroke="#e8c600" stroke-width="0.7" stroke-dasharray="1.35 1.35"/><polygon points="170.4,251.6 181.7,268.4 180.9,273.0 169.8,255.4" fill="#5a0c10" stroke="#e8c600" stroke-width="0.85"/><line x1="170.1" y1="253.8" x2="181.3" y2="271.0" stroke="#e8c600" stroke-width="0.7" stroke-dasharray="1.35 1.35"/><polygon points="167.7,268.0 178.4,287.8 177.6,292.8 167.1,272.0" fill="#5a0c10" stroke="#e8c600" stroke-width="0.85"/><line x1="167.4" y1="270.3" x2="178.0" y2="290.6" stroke="#e8c600" stroke-width="0.7" stroke-dasharray="1.35 1.35"/><polygon points="217.5,55.8 220.4,52.2 227.5,54.6 185.3,299.9 178.0,304.7 175.5,302.3" fill="#5a0c10" stroke="#e8c600" stroke-width="1.15" stroke-dasharray="1.35 1.35"/><line x1="220.4" y1="52.2" x2="178.0" y2="304.7" stroke="#e8c600" stroke-width="0.95"/><text x="34.9" y="51.8" font-size="8.45" fill="#c8c8c8">camera</text></svg><div class="a" style="left:373px;top:43px;width:323px;height:253px;background:#000"></div><svg style="left:373px;top:43px" width="323" height="253" viewBox="373 43 323 253" ><path d="M373.50,43V296M376.00,43V296M378.50,43V296M381.00,43V296M383.50,43V296M386.00,43V296M388.50,43V296M391.00,43V296M393.50,43V296M396.00,43V296M398.50,43V296M401.00,43V296M403.50,43V296M406.00,43V296M408.50,43V296M411.00,43V296M413.50,43V296M416.00,43V296M418.50,43V296M421.00,43V296M423.50,43V296M426.00,43V296M428.50,43V296M431.00,43V296M433.50,43V296M436.00,43V296M438.50,43V296M441.00,43V296M443.50,43V296M446.00,43V296M448.50,43V296M451.00,43V296M453.50,43V296M456.00,43V296M458.50,43V296M461.00,43V296M463.50,43V296M466.00,43V296M468.50,43V296M471.00,43V296M473.50,43V296M476.00,43V296M478.50,43V296M481.00,43V296M483.50,43V296M486.00,43V296M488.50,43V296M491.00,43V296M493.50,43V296M496.00,43V296M498.50,43V296M501.00,43V296M503.50,43V296M506.00,43V296M508.50,43V296M511.00,43V296M513.50,43V296M516.00,43V296M518.50,43V296M521.00,43V296M523.50,43V296M526.00,43V296M528.50,43V296M531.00,43V296M533.50,43V296M536.00,43V296M538.50,43V296M541.00,43V296M543.50,43V296M546.00,43V296M548.50,43V296M551.00,43V296M553.50,43V296M556.00,43V296M558.50,43V296M561.00,43V296M563.50,43V296M566.00,43V296M568.50,43V296M571.00,43V296M573.50,43V296M576.00,43V296M578.50,43V296M581.00,43V296M583.50,43V296M586.00,43V296M588.50,43V296M591.00,43V296M593.50,43V296M596.00,43V296M598.50,43V296M601.00,43V296M603.50,43V296M606.00,43V296M608.50,43V296M611.00,43V296M613.50,43V296M616.00,43V296M618.50,43V296M621.00,43V296M623.50,43V296M626.00,43V296M628.50,43V296M631.00,43V296M633.50,43V296M636.00,43V296M638.50,43V296M641.00,43V296M643.50,43V296M646.00,43V296M648.50,43V296M651.00,43V296M653.50,43V296M656.00,43V296M658.50,43V296M661.00,43V296M663.50,43V296M666.00,43V296M668.50,43V296M671.00,43V296M673.50,43V296M676.00,43V296M678.50,43V296M681.00,43V296M683.50,43V296M686.00,43V296M688.50,43V296M691.00,43V296M693.50,43V296M696.00,43V296M373,43.50H696M373,46.00H696M373,48.50H696M373,51.00H696M373,53.50H696M373,56.00H696M373,58.50H696M373,61.00H696M373,63.50H696M373,66.00H696M373,68.50H696M373,71.00H696M373,73.50H696M373,76.00H696M373,78.50H696M373,81.00H696M373,83.50H696M373,86.00H696M373,88.50H696M373,91.00H696M373,93.50H696M373,96.00H696M373,98.50H696M373,101.00H696M373,103.50H696M373,106.00H696M373,108.50H696M373,111.00H696M373,113.50H696M373,116.00H696M373,118.50H696M373,121.00H696M373,123.50H696M373,126.00H696M373,128.50H696M373,131.00H696M373,133.50H696M373,136.00H696M373,138.50H696M373,141.00H696M373,143.50H696M373,146.00H696M373,148.50H696M373,151.00H696M373,153.50H696M373,156.00H696M373,158.50H696M373,161.00H696M373,163.50H696M373,166.00H696M373,168.50H696M373,171.00H696M373,173.50H696M373,176.00H696M373,178.50H696M373,181.00H696M373,183.50H696M373,186.00H696M373,188.50H696M373,191.00H696M373,193.50H696M373,196.00H696M373,198.50H696M373,201.00H696M373,203.50H696M373,206.00H696M373,208.50H696M373,211.00H696M373,213.50H696M373,216.00H696M373,218.50H696M373,221.00H696M373,223.50H696M373,226.00H696M373,228.50H696M373,231.00H696M373,233.50H696M373,236.00H696M373,238.50H696M373,241.00H696M373,243.50H696M373,246.00H696M373,248.50H696M373,251.00H696M373,253.50H696M373,256.00H696M373,258.50H696M373,261.00H696M373,263.50H696M373,266.00H696M373,268.50H696M373,271.00H696M373,273.50H696M373,276.00H696M373,278.50H696M373,281.00H696M373,283.50H696M373,286.00H696M373,288.50H696M373,291.00H696M373,293.50H696M373,296.00H696" stroke="#6e6e6e" stroke-width="0.8" fill="none"/><path d="M536,43V296" stroke="#004c4c" stroke-width="1.5"/><path d="M373,123.5H696" stroke="#005050" stroke-width="1"/><path d="M376,43V296" stroke="#64401f" stroke-width="1.5" opacity="0.8"/><path d="M373,283.5H696" stroke="#6a4218" stroke-width="1"/><rect x="373" y="43" width="35.7" height="10" fill="#000"/><text x="374.1" y="51.8" font-size="7.9" fill="#d0d0d0">top (x/y)</text><rect x="526.90" y="163.20" width="3.4" height="3.4" fill="#fff"/><rect x="526.90" y="169.30" width="3.4" height="3.4" fill="#fff"/><rect x="526.90" y="175.20" width="3.4" height="3.4" fill="#fff"/><rect x="532.70" y="163.20" width="3.4" height="3.4" fill="#fff"/><rect x="532.70" y="169.30" width="3.4" height="3.4" fill="#fff"/><rect x="532.70" y="175.20" width="3.4" height="3.4" fill="#fff"/><rect x="538.40" y="163.20" width="3.4" height="3.4" fill="#fff"/><rect x="538.40" y="169.30" width="3.4" height="3.4" fill="#fff"/><rect x="538.40" y="175.20" width="3.4" height="3.4" fill="#fff"/><rect x="531.8" y="168.4" width="5.2" height="5.2" rx="1" fill="#f01010"/><text x="533" y="158.3" font-size="8.8" font-weight="bold" fill="#fff">22.00</text><text x="482.6" y="177" font-size="8.8" font-weight="bold" fill="#fff">28.00</text></svg><div class="sb" style="left:696px;top:43px;width:10px;height:253px"></div><div class="ar" style="left:696px;top:43px;width:10px;height:10px"></div><svg style="left:696px;top:43px" width="10" height="10" viewBox="696 43 10 10" ><polygon points="698.3,48.8 702.9,48.8 700.6,46.2" fill="#000"/></svg><div class="ar" style="left:696px;top:286px;width:10px;height:10px"></div><svg style="left:696px;top:286px" width="10" height="10" viewBox="696 286 10 10" ><polygon points="698.3,289.5 702.9,289.5 700.6,292.1" fill="#000"/></svg><div class="ar" style="left:696px;top:166.5px;width:10px;height:10.300000000000011px;background:#dedbd4"></div><div class="sb" style="left:373px;top:296px;width:323px;height:10px"></div><div class="ar" style="left:373px;top:296px;width:10px;height:10px"></div><svg style="left:373px;top:296px" width="10" height="10" viewBox="373 296 10 10" ><polygon points="378.8,298.3 378.8,302.9 376.2,300.6" fill="#000"/></svg><div class="ar" style="left:686px;top:296px;width:10px;height:10px"></div><svg style="left:686px;top:296px" width="10" height="10" viewBox="686 296 10 10" ><polygon points="689.5,298.3 689.5,302.9 692.1,300.6" fill="#000"/></svg><div class="ar" style="left:526px;top:296px;width:17.299999999999955px;height:10px;background:#dedbd4"></div><div class="a" style="left:696px;top:296px;width:10px;height:10px;background:#d4d0c8"></div><div class="a" style="left:34px;top:310px;width:325px;height:250px;background:#000"></div><svg style="left:34px;top:310px" width="325" height="250" viewBox="34 310 325 250" ><path d="M34.40,310V560M41.34,310V560M48.28,310V560M55.21,310V560M62.15,310V560M76.03,310V560M82.96,310V560M89.90,310V560M96.84,310V560M103.78,310V560M110.71,310V560M117.65,310V560M131.53,310V560M138.46,310V560M145.40,310V560M152.34,310V560M159.28,310V560M166.21,310V560M173.15,310V560M187.03,310V560M193.96,310V560M200.90,310V560M207.84,310V560M214.78,310V560M221.71,310V560M228.65,310V560M242.53,310V560M249.46,310V560M256.40,310V560M263.34,310V560M270.27,310V560M277.21,310V560M284.15,310V560M298.02,310V560M304.96,310V560M311.90,310V560M318.84,310V560M325.77,310V560M332.71,310V560M339.65,310V560M353.52,310V560M34,316.52H359M34,323.46H359M34,330.40H359M34,337.34H359M34,344.27H359M34,358.15H359M34,365.09H359M34,372.02H359M34,378.96H359M34,385.90H359M34,392.84H359M34,399.77H359M34,413.65H359M34,420.59H359M34,427.52H359M34,434.46H359M34,441.40H359M34,448.34H359M34,455.27H359M34,469.15H359M34,476.09H359M34,483.02H359M34,489.96H359M34,496.90H359M34,503.84H359M34,510.77H359M34,524.65H359M34,531.59H359M34,538.52H359M34,545.46H359M34,552.40H359M34,559.34H359" stroke="#545454" stroke-width="0.72" fill="none"/><path d="M69.09,310V560M124.59,310V560M180.09,310V560M235.59,310V560M291.09,310V560M346.59,310V560M34,351.21H359M34,406.71H359M34,462.21H359M34,517.71H359" stroke="#848484" stroke-width="0.72" fill="none"/><rect x="34" y="310" width="40" height="9.6" fill="#000"/><text x="34.8" y="318.5" font-size="7.8" fill="#d0d0d0">front (y/z)</text><path d="M117.65,310V552.4M214.78,310V552.4M117.65,552.4H214.78" stroke="#f40000" stroke-width="0.9" stroke-dasharray="1.9 1.8" fill="none"/><path d="M117.65,552.4L166.45,310M131.53,552.4L180.32,310M117.65,552.4H131.53" stroke="#f40000" stroke-width="0.95" fill="none"/><circle cx="117.65" cy="552.4" r="0.55" fill="#ffd0d0"/><circle cx="131.53" cy="552.4" r="0.55" fill="#ffd0d0"/><rect x="124.59" y="531.59" width="6.9375" height="6.9375" fill="none" stroke="#f40000" stroke-width="0.9"/><path d="M126.06,533.06L130.06,537.06M130.06,533.06L126.06,537.06" stroke="#e8c4c4" stroke-width="0.7" fill="none"/><circle cx="124.59" cy="531.59" r="0.55" fill="#ffd0d0"/><circle cx="124.59" cy="538.52" r="0.55" fill="#ffd0d0"/><circle cx="131.53" cy="531.59" r="0.55" fill="#ffd0d0"/><circle cx="131.53" cy="538.52" r="0.55" fill="#ffd0d0"/><rect x="131.53" y="496.90" width="6.9375" height="6.9375" fill="none" stroke="#f40000" stroke-width="0.9"/><path d="M132.99,498.37L136.99,502.37M136.99,498.37L132.99,502.37" stroke="#e8c4c4" stroke-width="0.7" fill="none"/><circle cx="131.53" cy="496.90" r="0.55" fill="#ffd0d0"/><circle cx="131.53" cy="503.84" r="0.55" fill="#ffd0d0"/><circle cx="138.46" cy="496.90" r="0.55" fill="#ffd0d0"/><circle cx="138.46" cy="503.84" r="0.55" fill="#ffd0d0"/><rect x="138.46" y="462.21" width="6.9375" height="6.9375" fill="none" stroke="#f40000" stroke-width="0.9"/><path d="M139.93,463.68L143.93,467.68M143.93,463.68L139.93,467.68" stroke="#e8c4c4" stroke-width="0.7" fill="none"/><circle cx="138.46" cy="462.21" r="0.55" fill="#ffd0d0"/><circle cx="138.46" cy="469.15" r="0.55" fill="#ffd0d0"/><circle cx="145.40" cy="462.21" r="0.55" fill="#ffd0d0"/><circle cx="145.40" cy="469.15" r="0.55" fill="#ffd0d0"/><rect x="145.40" y="427.52" width="6.9375" height="6.9375" fill="none" stroke="#f40000" stroke-width="0.9"/><path d="M146.87,428.99L150.87,432.99M150.87,428.99L146.87,432.99" stroke="#e8c4c4" stroke-width="0.7" fill="none"/><circle cx="145.40" cy="427.52" r="0.55" fill="#ffd0d0"/><circle cx="145.40" cy="434.46" r="0.55" fill="#ffd0d0"/><circle cx="152.34" cy="427.52" r="0.55" fill="#ffd0d0"/><circle cx="152.34" cy="434.46" r="0.55" fill="#ffd0d0"/><rect x="152.34" y="392.84" width="6.9375" height="6.9375" fill="none" stroke="#f40000" stroke-width="0.9"/><path d="M153.81,394.31L157.81,398.31M157.81,394.31L153.81,398.31" stroke="#e8c4c4" stroke-width="0.7" fill="none"/><circle cx="152.34" cy="392.84" r="0.55" fill="#ffd0d0"/><circle cx="152.34" cy="399.77" r="0.55" fill="#ffd0d0"/><circle cx="159.28" cy="392.84" r="0.55" fill="#ffd0d0"/><circle cx="159.28" cy="399.77" r="0.55" fill="#ffd0d0"/><rect x="159.28" y="358.15" width="6.9375" height="6.9375" fill="none" stroke="#f40000" stroke-width="0.9"/><path d="M160.74,359.62L164.74,363.62M164.74,359.62L160.74,363.62" stroke="#e8c4c4" stroke-width="0.7" fill="none"/><circle cx="159.28" cy="358.15" r="0.55" fill="#ffd0d0"/><circle cx="159.28" cy="365.09" r="0.55" fill="#ffd0d0"/><circle cx="166.21" cy="358.15" r="0.55" fill="#ffd0d0"/><circle cx="166.21" cy="365.09" r="0.55" fill="#ffd0d0"/><rect x="166.21" y="323.46" width="6.9375" height="6.9375" fill="none" stroke="#f40000" stroke-width="0.9"/><path d="M167.68,324.93L171.68,328.93M171.68,324.93L167.68,328.93" stroke="#e8c4c4" stroke-width="0.7" fill="none"/><circle cx="166.21" cy="323.46" r="0.55" fill="#ffd0d0"/><circle cx="166.21" cy="330.40" r="0.55" fill="#ffd0d0"/><circle cx="173.15" cy="323.46" r="0.55" fill="#ffd0d0"/><circle cx="173.15" cy="330.40" r="0.55" fill="#ffd0d0"/><path d="M164.60,342.80L168.00,346.20M168.00,342.80L164.60,346.20" stroke="#909090" stroke-width="0.8" fill="none"/><rect x="112.10" y="342.60" width="3.8" height="3.8" fill="#fff"/><rect x="216.70" y="342.60" width="3.8" height="3.8" fill="#fff"/><rect x="112.10" y="554.20" width="3.8" height="3.8" fill="#fff"/><rect x="164.30" y="554.20" width="3.8" height="3.8" fill="#fff"/><rect x="216.70" y="554.20" width="3.8" height="3.8" fill="#fff"/><text x="67.8" y="347.4" font-size="8.9" font-weight="bold" fill="#fff">120.00</text></svg><div class="sb" style="left:359px;top:310px;width:10px;height:250px"></div><div class="ar" style="left:359px;top:310px;width:10px;height:10px"></div><svg style="left:359px;top:310px" width="10" height="10" viewBox="359 310 10 10" ><polygon points="361.3,315.8 365.9,315.8 363.6,313.2" fill="#000"/></svg><div class="ar" style="left:359px;top:550px;width:10px;height:10px"></div><svg style="left:359px;top:550px" width="10" height="10" viewBox="359 550 10 10" ><polygon points="361.3,553.5 365.9,553.5 363.6,556.1" fill="#000"/></svg><div class="ar" style="left:359px;top:431.7px;width:10px;height:4.900000000000034px;background:#dedbd4"></div><div class="sb" style="left:34px;top:560px;width:325px;height:10px"></div><div class="ar" style="left:34px;top:560px;width:10px;height:10px"></div><svg style="left:34px;top:560px" width="10" height="10" viewBox="34 560 10 10" ><polygon points="39.8,562.3 39.8,566.9 37.2,564.6" fill="#000"/></svg><div class="ar" style="left:349px;top:560px;width:10px;height:10px"></div><svg style="left:349px;top:560px" width="10" height="10" viewBox="349 560 10 10" ><polygon points="352.5,562.3 352.5,566.9 355.1,564.6" fill="#000"/></svg><div class="ar" style="left:191.8px;top:560px;width:4.899999999999977px;height:10px;background:#dedbd4"></div><div class="a" style="left:359px;top:560px;width:10px;height:10px;background:#d4d0c8"></div><div class="a" style="left:373px;top:310px;width:323px;height:250px;background:#000"></div><svg style="left:373px;top:310px" width="323" height="250" viewBox="373 310 323 250" ><path d="M376.94,310V560M383.88,310V560M390.81,310V560M397.75,310V560M404.69,310V560M411.62,310V560M418.56,310V560M432.44,310V560M439.38,310V560M446.31,310V560M453.25,310V560M460.19,310V560M467.12,310V560M474.06,310V560M487.94,310V560M494.88,310V560M501.81,310V560M508.75,310V560M515.69,310V560M522.62,310V560M529.56,310V560M543.44,310V560M550.38,310V560M557.31,310V560M564.25,310V560M571.19,310V560M578.12,310V560M585.06,310V560M598.94,310V560M605.88,310V560M612.81,310V560M619.75,310V560M626.69,310V560M633.62,310V560M640.56,310V560M654.44,310V560M661.38,310V560M668.31,310V560M675.25,310V560M682.19,310V560M689.12,310V560M373,317.25H696M373,324.19H696M373,331.12H696M373,338.06H696M373,345.00H696M373,351.94H696M373,358.88H696M373,372.75H696M373,379.69H696M373,386.62H696M373,393.56H696M373,400.50H696M373,407.44H696M373,414.38H696M373,428.25H696M373,435.19H696M373,442.12H696M373,449.06H696M373,456.00H696M373,462.94H696M373,469.88H696M373,483.75H696M373,490.69H696M373,497.62H696M373,504.56H696M373,511.50H696M373,518.44H696M373,525.38H696M373,539.25H696M373,546.19H696M373,553.12H696" stroke="#545454" stroke-width="0.72" fill="none"/><path d="M425.50,310V560M481.00,310V560M536.50,310V560M592.00,310V560M647.50,310V560M373,310.31H696M373,365.81H696M373,421.31H696M373,476.81H696M373,532.31H696" stroke="#848484" stroke-width="0.72" fill="none"/><path d="M536.5,511.5V560" stroke="#005454" stroke-width="1"/><rect x="373" y="310" width="38" height="9.6" fill="#000"/><text x="374.1" y="318.5" font-size="7.8" fill="#d0d0d0">side (x/z)</text><path d="M467.12,310V511.5M474.06,310V511.5M536.5,310V511.5M543.44,310V511.5M467.12,511.5H474.06M536.5,511.5H543.44M474.06,497.62H536.5M474.06,490.69H536.5M474.06,462.94H536.5M474.06,456.00H536.5M474.06,428.25H536.5M474.06,421.31H536.5M474.06,393.56H536.5M474.06,386.62H536.5M474.06,358.88H536.5M474.06,351.94H536.5M474.06,324.19H536.5M474.06,317.25H536.5" stroke="#f40000" stroke-width="0.9" fill="none"/><path d="M474.06,511.5H536.5" stroke="#f40000" stroke-width="0.9" stroke-dasharray="1.9 1.8"/><circle cx="474.06" cy="497.62" r="0.55" fill="#ff9a9a"/><circle cx="474.06" cy="490.69" r="0.55" fill="#ff9a9a"/><circle cx="536.50" cy="497.62" r="0.55" fill="#ff9a9a"/><circle cx="536.50" cy="490.69" r="0.55" fill="#ff9a9a"/><circle cx="474.06" cy="462.94" r="0.55" fill="#ff9a9a"/><circle cx="474.06" cy="456.00" r="0.55" fill="#ff9a9a"/><circle cx="536.50" cy="462.94" r="0.55" fill="#ff9a9a"/><circle cx="536.50" cy="456.00" r="0.55" fill="#ff9a9a"/><circle cx="474.06" cy="428.25" r="0.55" fill="#ff9a9a"/><circle cx="474.06" cy="421.31" r="0.55" fill="#ff9a9a"/><circle cx="536.50" cy="428.25" r="0.55" fill="#ff9a9a"/><circle cx="536.50" cy="421.31" r="0.55" fill="#ff9a9a"/><circle cx="474.06" cy="393.56" r="0.55" fill="#ff9a9a"/><circle cx="474.06" cy="386.62" r="0.55" fill="#ff9a9a"/><circle cx="536.50" cy="393.56" r="0.55" fill="#ff9a9a"/><circle cx="536.50" cy="386.62" r="0.55" fill="#ff9a9a"/><circle cx="474.06" cy="358.88" r="0.55" fill="#ff9a9a"/><circle cx="474.06" cy="351.94" r="0.55" fill="#ff9a9a"/><circle cx="536.50" cy="358.88" r="0.55" fill="#ff9a9a"/><circle cx="536.50" cy="351.94" r="0.55" fill="#ff9a9a"/><circle cx="474.06" cy="324.19" r="0.55" fill="#ff9a9a"/><circle cx="474.06" cy="317.25" r="0.55" fill="#ff9a9a"/><circle cx="536.50" cy="324.19" r="0.55" fill="#ff9a9a"/><circle cx="536.50" cy="317.25" r="0.55" fill="#ff9a9a"/><circle cx="467.12" cy="511.5" r="0.55" fill="#ffb0b0"/><circle cx="474.06" cy="511.5" r="0.55" fill="#ffb0b0"/><circle cx="536.50" cy="511.5" r="0.55" fill="#ffb0b0"/><circle cx="543.44" cy="511.5" r="0.55" fill="#ffb0b0"/><path d="M503.18,492.06L507.38,496.26M507.38,492.06L503.18,496.26" stroke="#a4a4a4" stroke-width="0.7" fill="none"/><path d="M503.18,457.37L507.38,461.57M507.38,457.37L503.18,461.57" stroke="#a4a4a4" stroke-width="0.7" fill="none"/><path d="M503.18,422.68L507.38,426.88M507.38,422.68L503.18,426.88" stroke="#a4a4a4" stroke-width="0.7" fill="none"/><path d="M503.18,387.99L507.38,392.19M507.38,387.99L503.18,392.19" stroke="#a4a4a4" stroke-width="0.7" fill="none"/><path d="M503.18,353.31L507.38,357.51M507.38,353.31L503.18,357.51" stroke="#a4a4a4" stroke-width="0.7" fill="none"/><path d="M503.18,318.62L507.38,322.82M507.38,318.62L503.18,322.82" stroke="#a4a4a4" stroke-width="0.7" fill="none"/><rect x="461.85" y="513.70" width="3.8" height="3.8" fill="#fff"/><rect x="503.70" y="513.70" width="3.8" height="3.8" fill="#fff"/><rect x="545.60" y="513.70" width="3.8" height="3.8" fill="#fff"/></svg><div class="sb" style="left:696px;top:310px;width:10px;height:250px"></div><div class="ar" style="left:696px;top:310px;width:10px;height:10px"></div><svg style="left:696px;top:310px" width="10" height="10" viewBox="696 310 10 10" ><polygon points="698.3,315.8 702.9,315.8 700.6,313.2" fill="#000"/></svg><div class="ar" style="left:696px;top:550px;width:10px;height:10px"></div><svg style="left:696px;top:550px" width="10" height="10" viewBox="696 550 10 10" ><polygon points="698.3,553.5 702.9,553.5 700.6,556.1" fill="#000"/></svg><div class="ar" style="left:696px;top:431.7px;width:10px;height:4.900000000000034px;background:#dedbd4"></div><div class="sb" style="left:373px;top:560px;width:323px;height:10px"></div><div class="ar" style="left:373px;top:560px;width:10px;height:10px"></div><svg style="left:373px;top:560px" width="10" height="10" viewBox="373 560 10 10" ><polygon points="378.8,562.3 378.8,566.9 376.2,564.6" fill="#000"/></svg><div class="ar" style="left:686px;top:560px;width:10px;height:10px"></div><svg style="left:686px;top:560px" width="10" height="10" viewBox="686 560 10 10" ><polygon points="689.5,562.3 689.5,566.9 692.1,564.6" fill="#000"/></svg><div class="ar" style="left:532.2px;top:560px;width:4.599999999999909px;height:10px;background:#dedbd4"></div><div class="a" style="left:696px;top:560px;width:10px;height:10px;background:#d4d0c8"></div>
<div class="a" style="left:706px;top:43px;width:94px;height:528px;background:#d4d0c8"></div><div class="a" style="left:706px;top:42.3px;width:94px;height:1px;background:#f6f5f2"></div><div class="a" style="left:706.3px;top:43px;width:1.2px;height:527px;background:#f4f3f0"></div><div class="a" style="left:708px;top:453px;width:92px;height:1px;background:#f4f3f0"></div><div class="t" style="left:712.9px;top:48.3px;font-size:7.0px;color:#000;letter-spacing:-0.214px;">Select:</div><div class="btn" style="left:712.1px;top:60px;width:82.4px;height:9.2px;line-height:7.0px;font-size:7.0px;background:#eceae6;border-color:#404040 #fff #fff #404040;box-shadow:inset 1px 1px 0 #808080"></div><div class="t" style="left:743.1px;top:59.8px;font-size:7.0px;color:#000;letter-spacing:-0.276px;">Groups</div><div class="btn" style="left:712.1px;top:75px;width:82.9px;height:9.6px;line-height:7.4px;font-size:7.0px;"></div><div class="t" style="left:742.5px;top:74.8px;font-size:7.0px;color:#000;letter-spacing:-0.176px;">Objects</div><div class="btn" style="left:712.1px;top:89.3px;width:82.9px;height:9.7px;line-height:7.5px;font-size:7.0px;"></div><div class="t" style="left:745px;top:89.2px;font-size:7.0px;color:#000;letter-spacing:-0.294px;">Solids</div><div class="sep" style="left:708px;top:104px;width:92px"></div><div class="t" style="left:709.4px;top:106.5px;font-size:7.0px;color:#000;letter-spacing:-0.189px;">Texture group:</div><div class="sunk" style="left:712.1px;top:116.9px;width:85.4px;height:11.7px;background:#fff"></div><div class="btn" style="left:787.3px;top:118.4px;width:8.7px;height:8.7px"></div><svg style="left:787.3px;top:118.4px" width="10" height="10" viewBox="787.3 118.4 10 10" ><polygon points="789.1,121.8 793.6,121.8 791.4,124.2" fill="#000"/></svg><div class="t" style="left:714.8px;top:118px;font-size:7.0px;color:#000;letter-spacing:-0.121px;">All Textures</div><div class="t" style="left:709.4px;top:130.2px;font-size:7.0px;color:#000;letter-spacing:-0.308px;">Current texture:</div><div class="sunk" style="left:712.1px;top:140.3px;width:85.4px;height:12.2px;background:#fff"></div><div class="btn" style="left:787.3px;top:141.8px;width:8.7px;height:9.2px"></div><svg style="left:787.3px;top:141.8px" width="10" height="10" viewBox="787.3 141.8 10 10" ><polygon points="789.1,145.4 793.6,145.4 791.4,147.8" fill="#000"/></svg><div class="t" style="left:716.9px;top:142px;font-size:7.0px;color:#000;letter-spacing:-0.146px;">models/props_interiors/</div><div class="a" style="left:712.1px;top:157.1px;width:46.7px;height:49.4px;background:linear-gradient(180deg,rgba(40,46,28,.5) 0%,rgba(40,46,28,0) 9%,rgba(0,0,0,0) 92%,rgba(40,46,28,.25) 100%),linear-gradient(90deg,#92977f 0%,#a9ae97 7%,#b6bba5 30%,#b1b6a0 50%,#a3a890 70%,#8a8f74 86%,#626848 100%)"></div><svg style="left:712.1px;top:157.1px" width="46.7" height="49.4" viewBox="712.1 157.1 46.7 49.4" ><ellipse cx="739.2" cy="191.8" rx="1.2" ry="0.7" fill="#4c4436" opacity="0.72" transform="rotate(3 739.2 191.8)"/><ellipse cx="716.2" cy="180.4" rx="1.3" ry="0.6" fill="#4c4436" opacity="0.80" transform="rotate(-23 716.2 180.4)"/><ellipse cx="729.5" cy="197.1" rx="0.8" ry="0.3" fill="#4c4436" opacity="0.47" transform="rotate(-17 729.5 197.1)"/><ellipse cx="730.9" cy="168.6" rx="1.3" ry="0.5" fill="#4c4436" opacity="0.73" transform="rotate(-26 730.9 168.6)"/><ellipse cx="720.5" cy="186.7" rx="0.5" ry="0.3" fill="#4c4436" opacity="0.79" transform="rotate(-17 720.5 186.7)"/><ellipse cx="745.0" cy="200.8" rx="0.6" ry="0.4" fill="#4c4436" opacity="0.51" transform="rotate(-18 745.0 200.8)"/><ellipse cx="736.0" cy="189.2" rx="0.6" ry="0.7" fill="#4c4436" opacity="0.70" transform="rotate(-6 736.0 189.2)"/><ellipse cx="726.7" cy="176.1" rx="0.6" ry="0.4" fill="#4c4436" opacity="0.38" transform="rotate(-11 726.7 176.1)"/><ellipse cx="746.7" cy="185.4" rx="1.0" ry="0.6" fill="#4c4436" opacity="0.38" transform="rotate(-8 746.7 185.4)"/><ellipse cx="746.8" cy="181.0" rx="0.7" ry="0.5" fill="#4c4436" opacity="0.70" transform="rotate(-27 746.8 181.0)"/><ellipse cx="725.0" cy="200.0" rx="1.3" ry="0.5" fill="#4c4436" opacity="0.55" transform="rotate(5 725.0 200.0)"/><ellipse cx="745.6" cy="176.3" rx="1.0" ry="0.3" fill="#4c4436" opacity="0.37" transform="rotate(-19 745.6 176.3)"/><ellipse cx="739.2" cy="200.6" rx="0.5" ry="0.4" fill="#4c4436" opacity="0.76" transform="rotate(-1 739.2 200.6)"/><ellipse cx="728.4" cy="175.8" rx="0.9" ry="0.6" fill="#4c4436" opacity="0.40" transform="rotate(-7 728.4 175.8)"/><ellipse cx="748.4" cy="162.6" rx="1.3" ry="0.3" fill="#4c4436" opacity="0.52" transform="rotate(9 748.4 162.6)"/><ellipse cx="729.1" cy="167.2" rx="0.7" ry="0.6" fill="#4c4436" opacity="0.40" transform="rotate(-10 729.1 167.2)"/><ellipse cx="726.9" cy="194.2" rx="1.0" ry="0.6" fill="#4c4436" opacity="0.50" transform="rotate(0 726.9 194.2)"/><ellipse cx="721.4" cy="163.1" rx="1.4" ry="0.5" fill="#4c4436" opacity="0.55" transform="rotate(-15 721.4 163.1)"/><ellipse cx="743.8" cy="175.3" rx="0.7" ry="0.6" fill="#4c4436" opacity="0.42" transform="rotate(10 743.8 175.3)"/><ellipse cx="716.4" cy="181.5" rx="1.2" ry="0.4" fill="#4c4436" opacity="0.72" transform="rotate(-22 716.4 181.5)"/><ellipse cx="739.5" cy="193.7" rx="0.5" ry="0.5" fill="#4c4436" opacity="0.42" transform="rotate(-4 739.5 193.7)"/><ellipse cx="726.5" cy="179.9" rx="1.4" ry="0.7" fill="#4c4436" opacity="0.84" transform="rotate(-1 726.5 179.9)"/><ellipse cx="752.3" cy="189.6" rx="0.7" ry="0.4" fill="#4c4436" opacity="0.59" transform="rotate(-21 752.3 189.6)"/><ellipse cx="719.5" cy="195.1" rx="0.9" ry="0.4" fill="#4c4436" opacity="0.82" transform="rotate(-9 719.5 195.1)"/><ellipse cx="722.1" cy="181.5" rx="0.9" ry="0.5" fill="#4c4436" opacity="0.60" transform="rotate(-26 722.1 181.5)"/><ellipse cx="745.5" cy="193.2" rx="1.1" ry="0.6" fill="#4c4436" opacity="0.73" transform="rotate(-7 745.5 193.2)"/><ellipse cx="736.7" cy="188.8" rx="1.2" ry="0.4" fill="#4c4436" opacity="0.84" transform="rotate(-12 736.7 188.8)"/><ellipse cx="752.1" cy="175.2" rx="0.6" ry="0.7" fill="#4c4436" opacity="0.59" transform="rotate(-14 752.1 175.2)"/><ellipse cx="727.7" cy="172.4" rx="0.7" ry="0.5" fill="#4c4436" opacity="0.69" transform="rotate(-8 727.7 172.4)"/><ellipse cx="728.6" cy="187.8" rx="1.1" ry="0.7" fill="#4c4436" opacity="0.53" transform="rotate(-19 728.6 187.8)"/></svg><div class="t" style="left:761.5px;top:157.5px;font-size:7.0px;color:#000;letter-spacing:-0.228px;">64x256</div><div class="a" style="left:760.9px;top:175px;width:36.9px;height:14px;background:#2a2a2a"></div><div class="btn" style="left:761.6px;top:175.7px;width:35.5px;height:12.6px;line-height:10.4px;font-size:7.0px;"></div><div class="t" style="left:766.3px;top:177px;font-size:7.0px;color:#000;letter-spacing:-0.153px;"><u>B</u>rowse...</div><div class="btn" style="left:761.2px;top:192.2px;width:36.6px;height:14.3px;line-height:12.1px;font-size:7.0px;"></div><div class="t" style="left:764.8px;top:194.2px;font-size:7.0px;color:#000;letter-spacing:-0.152px;"><u>R</u>eplace...</div><div class="sep" style="left:708px;top:210.8px;width:92px"></div><div class="t" style="left:709.4px;top:212.7px;font-size:7.0px;color:#000;letter-spacing:-0.330px;">VisGroups:</div><div class="sunk" style="left:708.5px;top:222.1px;width:89.5px;height:113.2px;background:#fff"></div><div class="btn" style="left:707.8px;top:337.3px;width:21.6px;height:11.2px;line-height:9.0px;font-size:7.0px;"></div><div class="t" style="left:709.8px;top:337.9px;font-size:7.0px;color:#000;letter-spacing:-0.103px;"><u>S</u>how</div><div class="btn" style="left:730.6px;top:337.3px;width:20.9px;height:11.2px;line-height:9.0px;font-size:7.0px;"></div><div class="t" style="left:735.6px;top:337.9px;font-size:7.0px;color:#000;letter-spacing:-0.116px;"><u>E</u>dit</div><div class="btn" style="left:753.5px;top:337.3px;width:22.1px;height:11.2px;line-height:9.0px;font-size:7.0px;"></div><div class="t" style="left:757.8px;top:337.9px;font-size:7.0px;color:#000;letter-spacing:-0.189px;"><u>M</u>ark</div><div class="btn" style="left:778.1px;top:337.3px;width:10.9px;height:11.2px;line-height:9.0px;font-size:7.0px;"></div><div class="btn" style="left:790.2px;top:337.3px;width:10.3px;height:11.2px;line-height:9.0px;font-size:7.0px;"></div><svg style="left:776px;top:337px" width="24" height="12" viewBox="776 337 24 12" ><path d="M783.4,339.7l3,3.3h-1.9v3.3h-2.2v-3.3h-1.9z" fill="#000"/><path d="M795.2,346.4l3,-3.3h-1.9v-3.3h-2.2v3.3h-1.9z" fill="#000"/></svg><div class="sep" style="left:708px;top:349.8px;width:92px"></div><div class="t" style="left:709.4px;top:351px;font-size:7.0px;color:#000;letter-spacing:-0.129px;">Move</div><div class="t" style="left:709.4px;top:358.1px;font-size:7.0px;color:#000;letter-spacing:-0.335px;">selected:</div><div class="btn" style="left:738.1px;top:352.9px;width:29.4px;height:13.4px;line-height:11.2px;font-size:7.0px;"></div><div class="t" style="left:741px;top:354.4px;font-size:7.0px;color:#000;letter-spacing:-0.142px;">to<u>W</u>orld</div><div class="btn" style="left:769px;top:352.9px;width:29.2px;height:13.4px;line-height:11.2px;font-size:7.0px;"></div><div class="t" style="left:773.1px;top:354.4px;font-size:7.0px;color:#000;letter-spacing:-0.256px;">to<u>E</u>ntity</div><div class="t" style="left:709.7px;top:369.7px;font-size:7.0px;color:#000;letter-spacing:-0.391px;"><u>C</u>ategories:</div><div class="sunk" style="left:708.5px;top:380px;width:88.5px;height:12.0px;background:#d4d0c8"></div><div class="btn" style="left:786.8px;top:381.5px;width:8.7px;height:9.0px"></div><svg style="left:786.8px;top:381.5px" width="10" height="10" viewBox="786.8 381.5 10 10" ><polygon points="788.6,385.0 793.1,385.0 790.9,387.4" fill="#808080"/></svg><div class="t" style="left:709.2px;top:394.3px;font-size:7.0px;color:#000;letter-spacing:-0.247px;"><u>O</u>bjects:</div><div class="sunk" style="left:708.5px;top:404.7px;width:88.5px;height:11.5px;background:#d4d0c8"></div><div class="btn" style="left:786.8px;top:406.2px;width:8.7px;height:8.5px"></div><svg style="left:786.8px;top:406.2px" width="10" height="10" viewBox="786.8 406.2 10 10" ><polygon points="788.6,409.4 793.1,409.4 790.9,411.8" fill="#808080"/></svg><div class="t" style="left:710.6px;top:421.9px;font-size:7.0px;color:#000;letter-spacing:-0.268px;"><u>F</u>aces:</div><div class="sunk" style="left:733.8px;top:420.6px;width:21.5px;height:13.5px;background:#d4d0c8"></div><div class="t" style="left:736.2px;top:422.2px;font-size:7px;color:#808080;">0</div><div class="btn" style="left:755.6px;top:420.6px;width:10.0px;height:6.6px;line-height:4.4px;font-size:7.0px;"></div><div class="btn" style="left:755.6px;top:427.5px;width:10.0px;height:6.8px;line-height:4.6px;font-size:7.0px;"></div><svg style="left:755px;top:420px" width="11" height="15" viewBox="755 420 11 15" ><path d="M759.2,424.6h2.4l-1.2,-1.4zM759.2,430.3h2.4l-1.2,1.4z" fill="#808080"/></svg><div class="btn" style="left:720px;top:436.9px;width:66.9px;height:13.7px;line-height:11.5px;font-size:7.0px;"></div><div class="t" style="left:733.1px;top:438.5px;font-size:7.0px;color:#000;letter-spacing:-0.175px;"><u>C</u>reate Prefab</div>
<div class="a" style="left:0;top:570px;width:800px;height:15px;background:#d4d0c8"></div><div class="a" style="left:0;top:571.5px;width:800px;height:1px;background:#f4f3f0"></div><div class="a" style="left:0px;top:573px;width:241px;height:11.5px;border:1px solid;border-color:#8c8a84 #f6f5f2 #f6f5f2 #8c8a84"></div><div class="t" style="left:1.3px;top:573px;font-size:7px;color:#000;letter-spacing:-0.220px;">For Help, press F1</div><div class="a" style="left:242.5px;top:573px;width:191.5px;height:11.5px;border:1px solid;border-color:#8c8a84 #f6f5f2 #f6f5f2 #8c8a84"></div><div class="t" style="left:244px;top:573px;font-size:7px;color:#000;letter-spacing:-0.055px;">group of 14 objects</div><div class="a" style="left:435.5px;top:573px;width:66.0px;height:11.5px;border:1px solid;border-color:#8c8a84 #f6f5f2 #f6f5f2 #8c8a84"></div><div class="t" style="left:437.5px;top:573px;font-size:7px;color:#000;">@-284, 191</div><div class="a" style="left:503px;top:573px;width:117px;height:11.5px;border:1px solid;border-color:#8c8a84 #f6f5f2 #f6f5f2 #8c8a84"></div><div class="t" style="left:505px;top:573px;font-size:7px;color:#000;letter-spacing:-0.080px;">22w 28l 120h @(-9 -308 194)</div><div class="a" style="left:621.5px;top:573px;width:53.5px;height:11.5px;border:1px solid;border-color:#8c8a84 #f6f5f2 #f6f5f2 #8c8a84"></div><div class="t" style="left:623.5px;top:573px;font-size:7px;color:#000;">Zoom: 5.55</div><div class="a" style="left:676.5px;top:573px;width:87.0px;height:11.5px;border:1px solid;border-color:#8c8a84 #f6f5f2 #f6f5f2 #8c8a84"></div><div class="t" style="left:678.5px;top:573px;font-size:7px;color:#000;">Snap: On Grid: 2</div><div class="a" style="left:765px;top:573px;width:35px;height:11.5px;border:1px solid;border-color:#8c8a84 #f6f5f2 #f6f5f2 #8c8a84"></div><div class="t" style="left:767px;top:573px;font-size:7px;color:#000;">&lt;-&gt;</div></body></html>
